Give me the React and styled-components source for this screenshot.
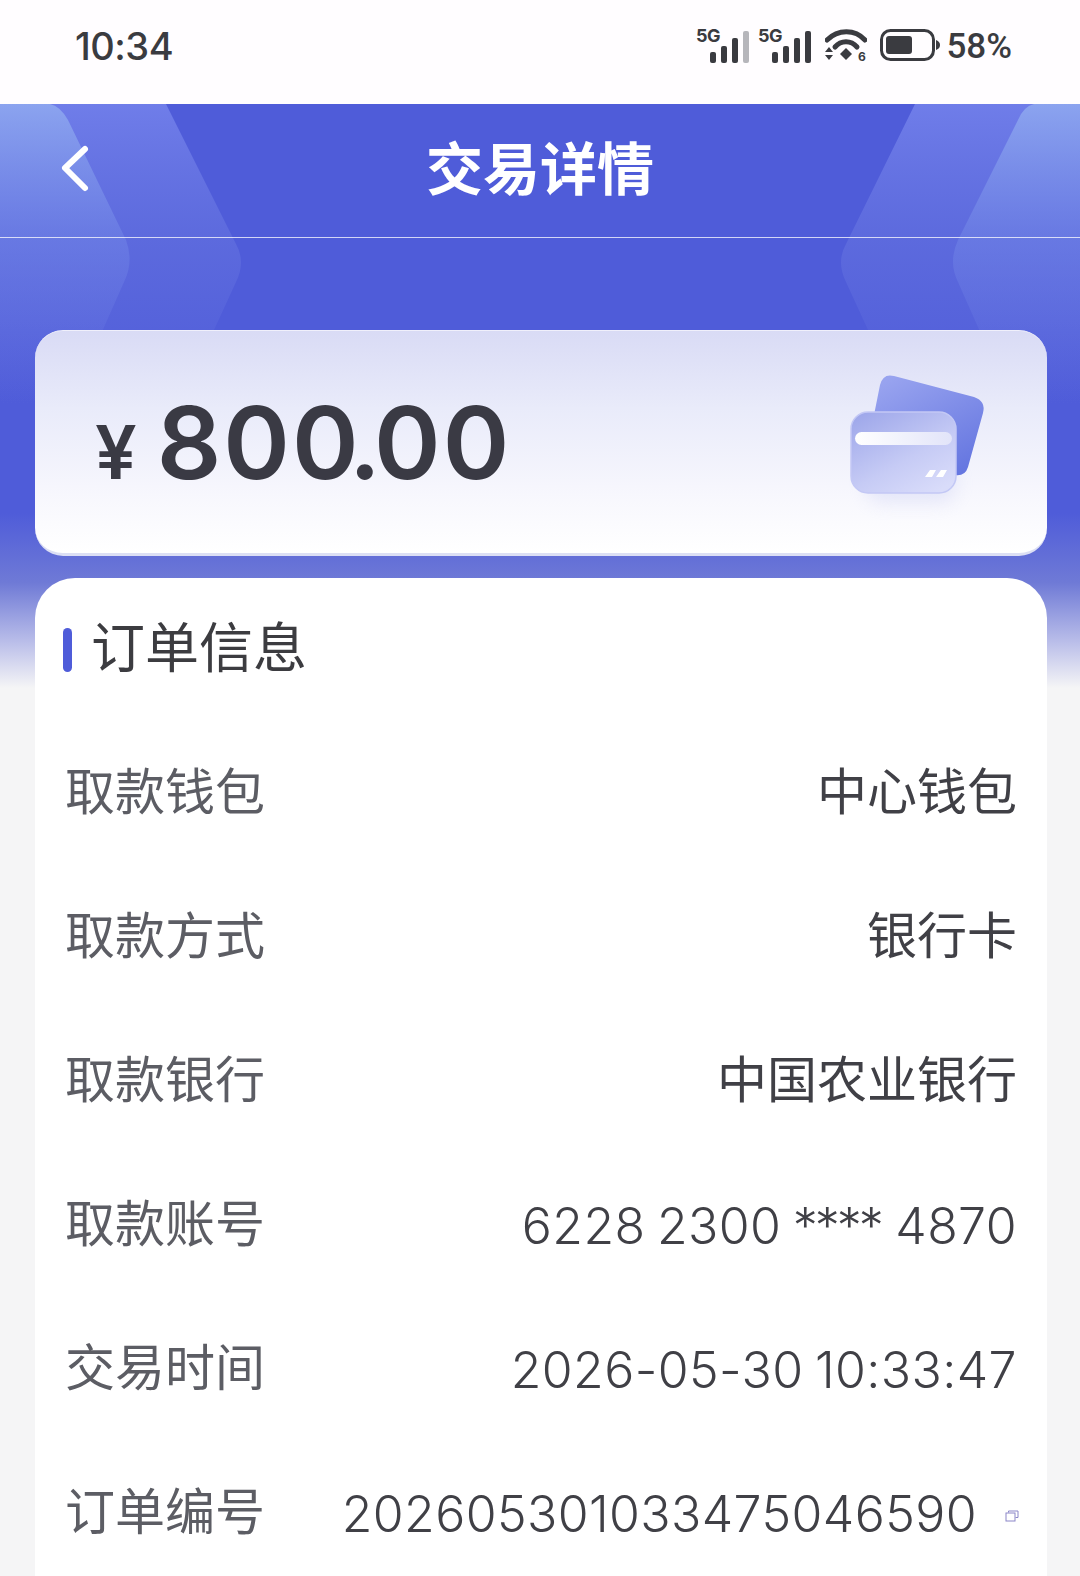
import React from 'react'
import styled, { createGlobalStyle } from 'styled-components'

const Global = createGlobalStyle`
    html, body {
        margin: 0;
        padding: 0;
        background: #f5f5f6;
    }
    body {
        font-family: "Noto Sans CJK SC", "Noto Sans", sans-serif;
    }
`
const Page = styled.div`
    width: 1080px;
    height: 1576px;
    overflow: hidden;
    position: relative;
    background: #f5f5f6;
`
const StatusBar = styled.div`
    height: 104px;
    background: #fffdff;
    box-sizing: border-box;
    padding: 0 68px 14px 75px;
    display: flex;
    align-items: center;
    justify-content: space-between;
    color: #3a3b40;
`
const Clock = styled.span`
    font-family: Inter, sans-serif;
    font-size: 38px;
    font-weight: 500;
    letter-spacing: -0.5px;
    margin-top: 2px;
`
const StatusIcons = styled.div`
    display: flex;
    align-items: center;
    gap: 9px;
`
const BarsIcon = styled.svg`
    margin-top: -4px;
`
const WifiIcon = styled.svg`
    margin-left: 5px;
    margin-bottom: -4px;
`
const BatteryIcon = styled.svg`
    margin-left: 4px;
`
const Percent = styled.span`
    font-family: Roboto, sans-serif;
    font-size: 35px;
    font-weight: 500;
    line-height: 1;
    margin: 3px 0 0 -3px;
`
const Hero = styled.div`
    position: absolute;
    top: 104px;
    left: 0;
    width: 1080px;
    height: 584px;
    background: linear-gradient(180deg, #4f5cd9 0%, #4f5cd9 70%, #6f7ad6 82%, #b9bde9 92%, #f5f5f6 100%);
`
const HeroShapes = styled.svg`
    position: absolute;
    top: 0;
    left: 0;
`
const Content = styled.div`
    position: relative;
    z-index: 1;
`
const NavBar = styled.div`
    height: 133px;
    border-bottom: 1px solid rgba(255, 255, 255, 0.75);
    display: flex;
    align-items: center;
    justify-content: center;
    position: relative;
`
const BackButton = styled.svg`
    position: absolute;
    left: 59px;
    top: 40px;
`
const Title = styled.h1`
    margin: 0 0 10px;
    color: #fff;
    font-size: 57px;
    font-weight: 700;
    line-height: 1;
`
const AmountCard = styled.div`
    margin: 92px 33px 0 35px;
    height: 226px;
    box-sizing: border-box;
    border-radius: 28px;
    border-top: 1px solid #f0f0fb;
    border-bottom: 3px solid #dcdff4;
    background: linear-gradient(180deg, #d9dbf5 0%, #e9ebfa 35%, #f6f6fd 70%, #ffffff 100%);
    padding: 0 60px;
    display: flex;
    align-items: center;
    justify-content: space-between;
`
const Amount = styled.div`
    display: flex;
    align-items: baseline;
    color: #3a3a44;
    font-family: Inter, sans-serif;
`
const Currency = styled.span`
    font-size: 74px;
    font-weight: 600;
    margin-right: 20px;
`
const Value = styled.span`
    font-size: 101px;
    font-weight: 600;
    letter-spacing: 2px;
`
const Tight = styled.span`
    letter-spacing: -7px;
`
const CardArt = styled.svg`
    margin: 12px -7px 0 0;
`
const InfoCard = styled.div`
    margin: 22px 33px 0 35px;
    border-radius: 40px 40px 0 0;
    background: #fff;
    height: 1000px;
`
const SectionTitle = styled.div`
    display: flex;
    align-items: center;
    height: 138px;
    padding: 0 0 4px 28px;
    box-sizing: border-box;
    gap: 19px;
    color: #3c3c40;
    font-size: 54px;
    font-weight: 400;
    line-height: 1;
`
const Marker = styled.span`
    width: 9px;
    height: 44px;
    margin-top: 9px;
    border-radius: 5px;
    background: #4f5cd9;
`
const Row = styled.div`
    height: 144px;
    display: flex;
    align-items: center;
    justify-content: space-between;
    padding: 0 30px;
    font-size: 50px;
    font-weight: 400;
`
const Label = styled.span`
    color: #5c5d64;
`
const Data = styled.span`
    color: #404046;
    display: flex;
    align-items: center;
    padding-top: 12px;
    font-family: Inter, "Noto Sans CJK SC", sans-serif;
    font-size: 50px;
    font-weight: 300;
    letter-spacing: 0.4px;
    word-spacing: -3px;
    white-space: pre;
`
const CnData = styled(Data)`
    padding-top: 0;
    font-family: "Noto Sans CJK SC", sans-serif;
    font-weight: 400;
    letter-spacing: 0;
    word-spacing: 0;
`
const Stars = styled.span`
    letter-spacing: -3px;
    margin-right: 3px;
`
const CopyIcon = styled.svg`
    margin: 4px -2px 0 28px;
`

function Bars({ dim }) {
    return (
        <BarsIcon width="53" height="39" viewBox="0 -4 53 39">
            <text x="0" y="14" fontFamily="Inter, sans-serif" fontWeight="700" fontSize="18" letterSpacing="-0.5" fill="#3a3b40">5G</text>
            <rect x="14" y="24" width="6" height="11" rx="2" fill="#3a3b40" />
            <rect x="25" y="18" width="6" height="17" rx="2" fill="#3a3b40" />
            <rect x="36" y="10" width="6" height="25" rx="2" fill="#3a3b40" />
            <rect x="47" y="3" width="6" height="32" rx="2" fill={dim ? '#b6b6bb' : '#3a3b40'} />
        </BarsIcon>
    )
}

const rows = [
    ['取款钱包', '中心钱包', true],
    ['取款方式', '银行卡', true],
    ['取款银行', '中国农业银行', true],
]

export default function App() {
    return (
        <Page>
            <Global />
            <Hero>
                <HeroShapes width="1080" height="584" viewBox="0 0 1080 584" fill="none">
                    <defs>
                        <linearGradient id="leaf" gradientUnits="userSpaceOnUse" x1="0" y1="0" x2="0" y2="300">
                            <stop offset="0" stopColor="#90aaf0" stopOpacity="0.85" />
                            <stop offset="0.45" stopColor="#6f82e6" stopOpacity="0.6" />
                            <stop offset="1" stopColor="#6a78e2" stopOpacity="0" />
                        </linearGradient>
                        <linearGradient id="band" gradientUnits="userSpaceOnUse" x1="0" y1="0" x2="0" y2="300">
                            <stop offset="0" stopColor="#7583ec" stopOpacity="0.85" />
                            <stop offset="0.45" stopColor="#6a78e2" stopOpacity="0.5" />
                            <stop offset="1" stopColor="#6a78e2" stopOpacity="0" />
                        </linearGradient>
                    </defs>
                    <path d="M0 0 H166 L236 140 Q246 158 236 178 L180 300 H0 Z" fill="url(#band)" />
                    <path d="M0 0 H50 Q60 2 68 16 L126 136 Q134 158 124 178 L70 300 H0 Z" fill="url(#leaf)" />
                    <path d="M1080 0 H915 L846 140 Q836 158 846 178 L902 300 H1080 Z" fill="url(#band)" />
                    <path d="M1080 0 H1034 Q1024 2 1018 16 L958 136 Q948 158 958 178 L1012 300 H1080 Z" fill="url(#leaf)" />
                </HeroShapes>
            </Hero>
            <Content>
                <StatusBar>
                    <Clock>10:34</Clock>
                    <StatusIcons>
                        <Bars dim />
                        <Bars />
                        <WifiIcon width="42" height="36" viewBox="0 0 42 36" fill="none">
                            <path d="M2 11 C13 0 30 0 40 11" stroke="#3a3b40" strokeWidth="5" strokeLinecap="round" />
                            <path d="M10 18 C16 11 26 11 32 18" stroke="#3a3b40" strokeWidth="5" strokeLinecap="round" />
                            <path d="M15 25 L21 19 L27 25 L21 31 Z" fill="#3a3b40" />
                            <path d="M0 23 L4 18 L8 23 Z M0 26 L8 26 L4 31 Z" fill="#3a3b40" />
                            <text x="33" y="32" fontFamily="Inter, sans-serif" fontWeight="700" fontSize="12" fill="#3a3b40">6</text>
                        </WifiIcon>
                        <BatteryIcon width="60" height="32" viewBox="0 0 60 32" fill="none">
                            <rect x="1.5" y="1.5" width="52" height="29" rx="9" stroke="#3a3b40" strokeWidth="3" />
                            <rect x="6" y="7" width="26" height="18" rx="3" fill="#3a3b40" />
                            <path d="M56 11 C59 12 60 14 60 16 C60 18 59 20 56 21 Z" fill="#3a3b40" />
                        </BatteryIcon>
                        <Percent>58%</Percent>
                    </StatusIcons>
                </StatusBar>
                <NavBar>
                    <BackButton width="32" height="50" viewBox="0 0 32 50" fill="none">
                        <path d="M26 5 L6 24 L26 44" stroke="#fff" strokeWidth="6" strokeLinecap="round" strokeLinejoin="round" />
                    </BackButton>
                    <Title>交易详情</Title>
                </NavBar>
                <AmountCard>
                    <Amount>
                        <Currency>¥</Currency>
                        <Value>80<Tight>0.</Tight>00</Value>
                    </Amount>
                    <CardArt width="150" height="150" viewBox="0 0 150 150" fill="none">
                        <defs>
                            <linearGradient id="back" x1="0.2" y1="0" x2="0.8" y2="1">
                                <stop offset="0" stopColor="#98a3ef" />
                                <stop offset="1" stopColor="#6475e0" />
                            </linearGradient>
                            <linearGradient id="front" x1="0.1" y1="0" x2="0.8" y2="1">
                                <stop offset="0" stopColor="#9ea7ea" />
                                <stop offset="0.6" stopColor="#c6cbf5" />
                                <stop offset="1" stopColor="#d9dcfa" />
                            </linearGradient>
                            <linearGradient id="strip" x1="0" y1="0" x2="1" y2="0">
                                <stop offset="0" stopColor="#ffffff" />
                                <stop offset="1" stopColor="#e2e4f9" />
                            </linearGradient>
                            <filter id="soft" x="-30%" y="-30%" width="160%" height="180%">
                                <feGaussianBlur stdDeviation="9" />
                            </filter>
                        </defs>
                        <rect x="22" y="90" width="90" height="40" rx="16" fill="#c9cdf2" opacity="0.4" filter="url(#soft)" />
                        <path d="M30 42 L36 12 Q39 0 50 3 L130 24 Q142 28 139 40 L124 94 Q121 104 110 102 L60 90 Z" fill="url(#back)" />
                        <rect x="7" y="39" width="105" height="81" rx="17" fill="url(#front)" stroke="#c3c8f5" strokeWidth="1.5" />
                        <rect x="11" y="59" width="97" height="13" rx="6.5" fill="url(#strip)" />
                        <path d="M81 104 L86 97 L92 97 L88 104 Z M92 104 L97 97 L103 97 L99 104 Z" fill="#fff" />
                    </CardArt>
                </AmountCard>
                <InfoCard>
                    <SectionTitle>
                        <Marker />
                        订单信息
                    </SectionTitle>
                    {rows.map(([label, value]) => (
                        <Row key={label}>
                            <Label>{label}</Label>
                            <CnData>{value}</CnData>
                        </Row>
                    ))}
                    <Row>
                        <Label>取款账号</Label>
                        <Data>6228 2300 <Stars>****</Stars> 4870</Data>
                    </Row>
                    <Row>
                        <Label>交易时间</Label>
                        <Data>2026-05-30 10:33:47</Data>
                    </Row>
                    <Row>
                        <Label>订单编号</Label>
                        <Data>
                            202605301033475046590
                            <CopyIcon width="14" height="12" viewBox="0 0 14 12" fill="none">
                                <path d="M3.5 2.5 V1 H13 V7.5 H10.5" stroke="#8b86c8" strokeWidth="1" />
                                <rect x="1" y="3" width="9" height="8" stroke="#8b86c8" strokeWidth="1" />
                            </CopyIcon>
                        </Data>
                    </Row>
                </InfoCard>
            </Content>
        </Page>
    )
}
